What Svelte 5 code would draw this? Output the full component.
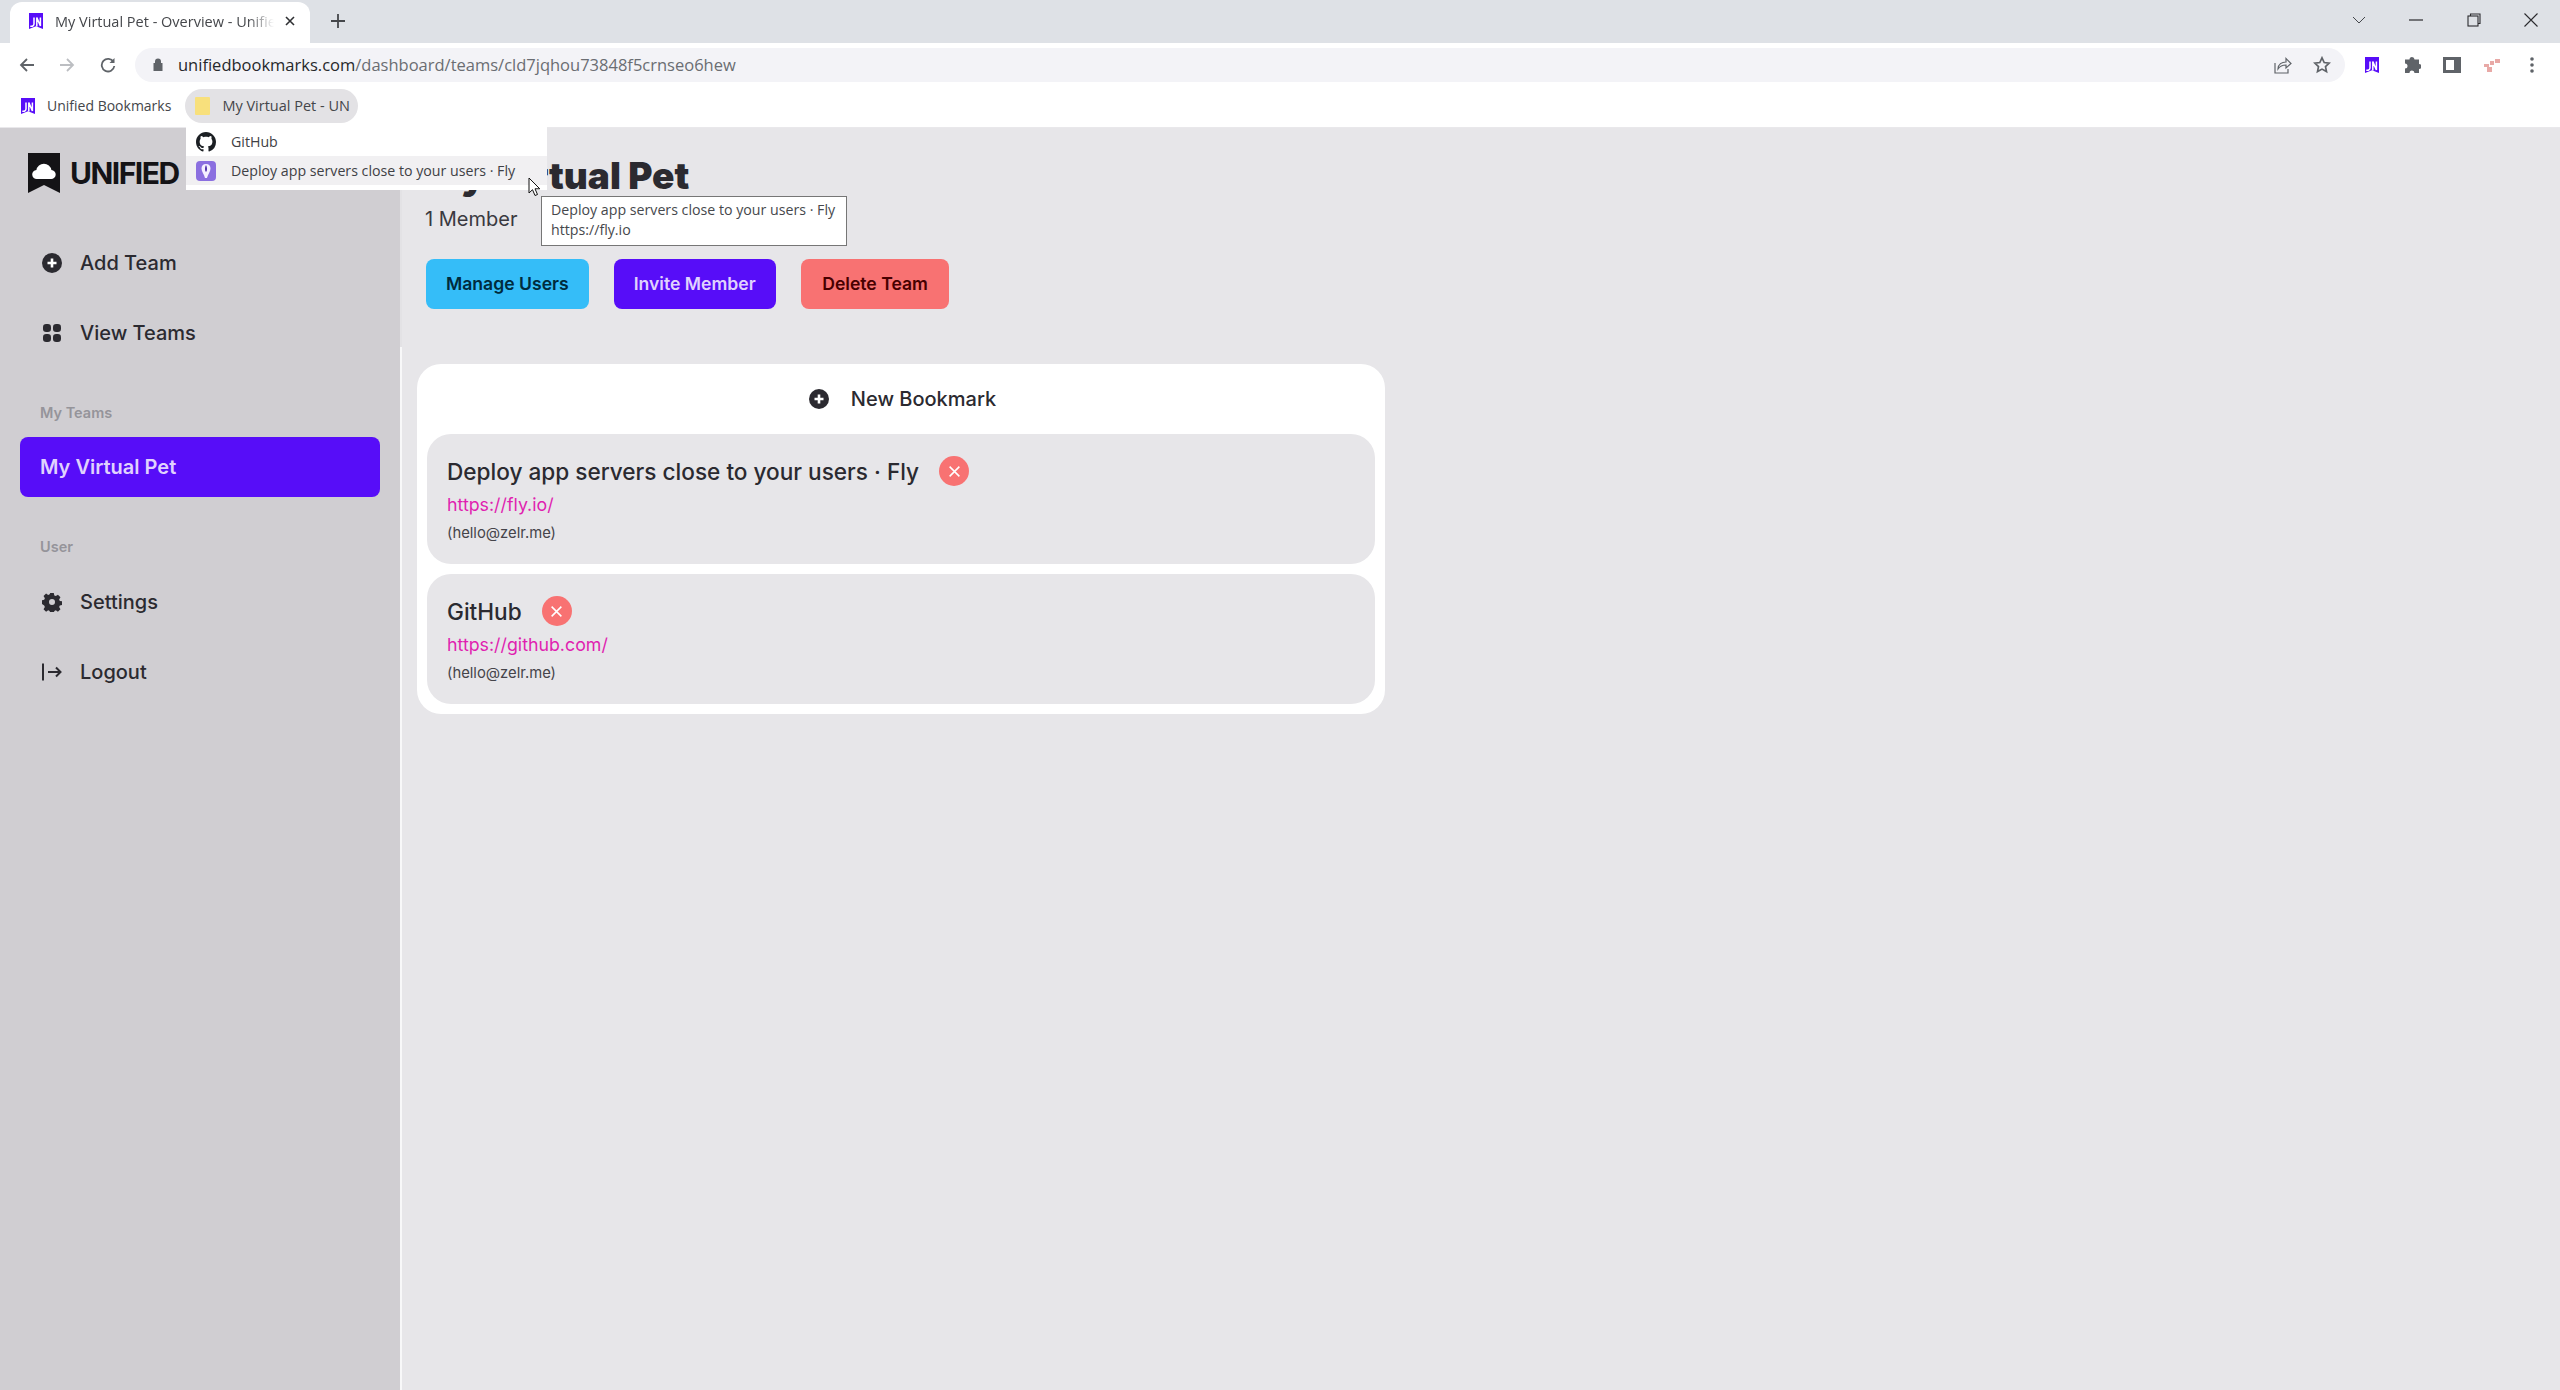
<script>
  const nav = [
    { label: 'Add Team', icon: 'plus' },
    { label: 'View Teams', icon: 'grid' }
  ];
  const userNav = [
    { label: 'Settings', icon: 'gear' },
    { label: 'Logout', icon: 'logout' }
  ];
  const bookmarks = [
    { title: 'Deploy app servers close to your users · Fly', url: 'https://fly.io/', owner: '(hello@zelr.me)' },
    { title: 'GitHub', url: 'https://github.com/', owner: '(hello@zelr.me)' }
  ];
</script>

{#snippet unLogo(size)}
  <svg class="un-logo" width={size} height={size} viewBox="0 0 16 16">
    <path d="M1 0h14v16l-7-2.800L1 16z" fill="#570df8" />
    <path d="M6 4.500v6.500a2.300 2.300 0 0 1-3.600 1.800M8.800 13.500V4.500l3.600 8.500V4.500" fill="none" stroke="#fff" stroke-width="1.500" />
  </svg>
{/snippet}

{#snippet icon(name)}
  {#if name === 'plus'}
    <svg width="20" height="20" viewBox="0 0 20 20">
      <circle cx="10" cy="10" r="10" fill="#2b2a30" />
      <path d="M10 5.500v9M5.500 10h9" stroke="#fff" stroke-width="2.600" />
    </svg>
  {:else if name === 'grid'}
    <svg width="20" height="20" viewBox="0 0 20 20" fill="#2b2a30">
      <rect x="1" y="1" width="8" height="8" rx="3.200" />
      <rect x="11" y="1" width="8" height="8" rx="3.200" />
      <rect x="1" y="11" width="8" height="8" rx="3.200" />
      <rect x="11" y="11" width="8" height="8" rx="3.200" />
    </svg>
  {:else if name === 'gear'}
    <svg width="20" height="20" viewBox="0 0 24 24">
      <path fill="#2b2a30" fill-rule="evenodd" d="M9.600 0h4.800l.7 3.200 2 .9 2.800-1.800 3.400 3.400-1.800 2.800.9 2 3.200.7v4.800l-3.200.7-.9 2 1.800 2.800-3.400 3.400-2.800-1.800-2 .9-.7 3.200H9.600l-.7-3.200-2-.9-2.800 1.800-3.400-3.400 1.800-2.800-.9-2L-1.600 14.400V9.600l3.200-.7.9-2-1.800-2.800 3.400-3.400 2.800 1.800 2-.9zM12 8a4 4 0 1 0 0 8 4 4 0 0 0 0-8z" transform="translate(1.200 1.200) scale(.9)" />
    </svg>
  {:else}
    <svg width="20" height="20" viewBox="0 0 20 20" fill="none" stroke="#2b2a30" stroke-width="2">
      <path d="M1 1.500v17M6 10h13M14 5.500l4.500 4.500-4.500 4.500" />
    </svg>
  {/if}
{/snippet}

<div class="window">
  <header class="tabstrip">
    <div class="tab">
      {@render unLogo(16)}
      <span class="tab-title">My Virtual Pet - Overview - Unified Bookmarks</span>
      <svg class="tab-close" width="10" height="10" viewBox="0 0 10 10" stroke="#2f3033" stroke-width="1.600"><path d="M1 1l8 8M9 1l-8 8" /></svg>
    </div>
    <svg class="new-tab" width="16" height="16" viewBox="0 0 16 16" stroke="#45474b" stroke-width="1.800"><path d="M8 1v14M1 8h14" /></svg>
    <div class="window-controls">
      <svg width="14" height="8" viewBox="0 0 14 8" fill="none" stroke="#45474b"><path d="M1 1l6 6 6-6" /></svg>
      <svg width="14" height="2" viewBox="0 0 14 2" stroke="#2b2b2e" stroke-width="1.200"><path d="M0 1h14" /></svg>
      <svg width="14" height="14" viewBox="0 0 14 14" fill="none" stroke="#2b2b2e" stroke-width="1.100"><rect x="1" y="3" width="10" height="10" /><path d="M3.500 3V1H13v9.500h-2" /></svg>
      <svg width="14" height="14" viewBox="0 0 14 14" stroke="#2b2b2e" stroke-width="1.100"><path d="M.5.500l13 13M13.500.500l-13 13" /></svg>
    </div>
  </header>

  <div class="toolbar">
    <svg width="16" height="16" viewBox="0 0 16 16" fill="none" stroke="#5f6368" stroke-width="1.800"><path d="M15 8H2M8 2L2 8l6 6" /></svg>
    <svg width="16" height="16" viewBox="0 0 16 16" fill="none" stroke="#bcbec2" stroke-width="1.800"><path d="M1 8h13M8 2l6 6-6 6" /></svg>
    <svg class="reload" width="16" height="16" viewBox="0 0 16 16" fill="none" stroke="#5f6368" stroke-width="1.800"><path d="M13.500 5A6.300 6.300 0 1 0 14.300 9" /><path d="M14.500 1v5h-5" fill="#5f6368" stroke="none" /></svg>
    <div class="omnibox">
      <svg width="10" height="13" viewBox="0 0 10 13"><path d="M2 5V3.500a3 3 0 0 1 6 0V5h1.500v8H.5V5z" fill="#5f6368" /></svg>
      <span class="url"><span class="url-host">unifiedbookmarks.com</span>/dashboard/teams/cld7jqhou73848f5crnseo6hew</span>
      <div class="omni-actions">
        <svg width="18" height="18" viewBox="0 0 18 18" fill="none" stroke="#5f6368" stroke-width="1.200"><path d="M1 7v10h13v-4M4 13c0-5 4-7 8-7V2.500l5 5-5 4.500V9c-3 0-6 1-8 4z" /></svg>
        <svg width="18" height="18" viewBox="0 0 18 18" fill="none" stroke="#5f6368" stroke-width="1.700"><path d="M9 1.800l2.200 4.700 5 .6-3.700 3.500 1 5L9 13.100l-4.500 2.500 1-5L1.800 7.100l5-.6z" /></svg>
      </div>
    </div>
    <div class="extensions">
      {@render unLogo(16)}
      <svg width="18" height="18" viewBox="0 0 18 18"><path fill="#5f6368" d="M6.500 3.500a2.500 2.500 0 0 1 5 0H16v4.500a2.500 2.500 0 0 1 0 5V17h-4.500a2.500 2.500 0 0 0-5 0H2v-4.500a2.500 2.500 0 0 0 0-5V3.500z" /></svg>
      <svg width="18" height="18" viewBox="0 0 18 18"><path fill-rule="evenodd" fill="#5f6368" d="M0 1h18v16H0zM3 4v10h8V4z" /></svg>
      <svg width="16" height="14" viewBox="0 0 16 14" fill="#e8a9a6"><path d="M0 6h5v3h3v5H3V9H0zM6 3h4v4H6zM11 1h5v4h-5z" /></svg>
      <svg width="4" height="16" viewBox="0 0 4 16" fill="#5f6368"><circle cx="2" cy="2" r="1.800" /><circle cx="2" cy="8" r="1.800" /><circle cx="2" cy="14" r="1.800" /></svg>
    </div>
  </div>

  <nav class="bookmarks-bar">
    <div class="bm-item">
      {@render unLogo(16)}
      <span>Unified Bookmarks</span>
    </div>
    <div class="bm-item open">
      <span class="folder"></span>
      <span>My Virtual Pet - UN</span>
    </div>
  </nav>

  <div class="page">
    <aside class="sidebar">
      <div class="logo">
        <svg width="32" height="40" viewBox="0 0 32 40">
          <path d="M0 0h32v40L16 32 0 40z" fill="#141316" />
          <path d="M9 26a4.500 4.500 0 0 1-.6-9 7.600 7.600 0 0 1 15 0 4.500 4.500 0 0 1-.4 9z" fill="#fff" />
        </svg>
        <span>UNIFIED</span>
      </div>

      <ul class="menu">
        {#each nav as item}
          <li>{@render icon(item.icon)}<span>{item.label}</span></li>
        {/each}
      </ul>

      <h3 class="menu-title teams">My Teams</h3>
      <div class="team active">My Virtual Pet</div>

      <h3 class="menu-title user">User</h3>
      <ul class="menu">
        {#each userNav as item}
          <li>{@render icon(item.icon)}<span>{item.label}</span></li>
        {/each}
      </ul>
    </aside>

    <main class="content">
      <h1>My Virtual Pet</h1>
      <p class="members">1 Member</p>
      <div class="actions">
        <button class="btn info">Manage Users</button>
        <button class="btn primary">Invite Member</button>
        <button class="btn error">Delete Team</button>
      </div>

      <section class="card">
        <div class="new-bookmark">
          {@render icon('plus')}
          <span>New Bookmark</span>
        </div>
        {#each bookmarks as b}
          <article class="bookmark">
            <div class="bookmark-head">
              <h2>{b.title}</h2>
              <span class="delete">
                <svg width="13" height="13" viewBox="0 0 12 12" stroke="#fff" stroke-width="1.400"><path d="M1.500 1.500l9 9M10.500 1.500l-9 9" /></svg>
              </span>
            </div>
            <a href={b.url}>{b.url}</a>
            <small>{b.owner}</small>
          </article>
        {/each}
      </section>
    </main>
  </div>

  <!-- bookmark folder popup, system tooltip and mouse pointer sit over the page -->
  <div class="popup">
    <div class="popup-row">
      <svg width="20" height="20" viewBox="0 0 16 16"><path fill="#1b1f23" d="M8 0C3.580 0 0 3.580 0 8c0 3.540 2.290 6.530 5.470 7.590.4.070.55-.17.55-.38 0-.19-.01-.82-.01-1.490-2.010.37-2.530-.49-2.690-.94-.09-.23-.48-.94-.82-1.130-.28-.15-.68-.52-.01-.53.63-.01 1.080.58 1.230.82.72 1.210 1.870.87 2.330.66.07-.52.28-.87.51-1.070-1.780-.2-3.640-.89-3.640-3.950 0-.87.31-1.590.82-2.150-.08-.2-.36-1.020.08-2.120 0 0 .67-.21 2.200.82.640-.18 1.320-.27 2-.27s1.360.09 2 .27c1.530-1.040 2.200-.82 2.200-.82.440 1.100.160 1.920.080 2.120.51.560.820 1.270.820 2.150 0 3.070-1.870 3.750-3.650 3.950.290.250.540.730.540 1.480 0 1.070-.010 1.930-.010 2.200 0 .210.150.460.550.380A8.013 8.013 0 0 0 16 8c0-4.420-3.580-8-8-8z" /></svg>
      <span>GitHub</span>
    </div>
    <div class="popup-row hover">
      <svg width="20" height="20" viewBox="0 0 20 20">
        <rect width="20" height="20" rx="4" fill="#8b6fe0" />
        <path d="M10 3c3 0 4.500 2 4.500 4.500 0 3-2.500 5.500-3.500 9.500H9C8 13 5.500 10.500 5.500 7.500 5.500 5 7 3 10 3z" fill="#f4f0ff" />
        <path d="M10 4c-1 2-1.300 4-.6 6.500h1.200C11.300 8 11 6 10 4z" fill="#4b2aa8" />
      </svg>
      <span>Deploy app servers close to your users · Fly</span>
    </div>
  </div>

  <div class="tooltip">Deploy app servers close to your users · Fly<br />https://fly.io</div>

  <svg class="cursor" width="13" height="20" viewBox="0 0 13 20"><path d="M1 1v15l3.500-3.300 2.500 5.800 2.500-1-2.500-5.700h4.800z" fill="#fff" stroke="#111" stroke-width="1" /></svg>
</div>

<style>
  :global(body) {
    margin: 0;
    background: #e7e6e9;
  }

  .window {
    position: relative;
    width: 2560px;
    height: 1390px;
    overflow: hidden;
    display: flex;
    flex-direction: column;
    font-family: Inter, "Liberation Sans", sans-serif;
    color: #2b2a30;
  }

  .tabstrip {
    height: 43px;
    flex: none;
    background: #dee1e6;
    display: flex;
    align-items: flex-end;
    padding-left: 10px;
    box-sizing: border-box;
  }

  .tab {
    width: 300px;
    height: 41px;
    background: #fff;
    border-radius: 12px 12px 0 0;
    display: flex;
    align-items: center;
    padding: 0 15px 3px 18px;
    box-sizing: border-box;
    gap: 11px;
  }

  .tab-title {
    flex: 1;
    overflow: hidden;
    white-space: nowrap;
    font: 14.500px "Open Sans", "Liberation Sans", sans-serif;
    color: #45474b;
    mask-image: linear-gradient(to right, #000 88%, transparent);
  }

  .new-tab {
    margin: 0 0 14px 20px;
  }

  .window-controls {
    margin-left: auto;
    align-self: center;
    display: flex;
    align-items: center;
    width: 186px;
    justify-content: space-between;
    margin-right: 22px;
    margin-bottom: 4px;
  }

  .toolbar {
    height: 43px;
    flex: none;
    background: #fff;
    display: flex;
    align-items: center;
    padding-left: 19px;
    gap: 24px;
    box-sizing: border-box;
  }

  .reload {
    margin-left: 1px;
  }

  .omnibox {
    flex: 1;
    height: 34px;
    margin-left: -5px;
    background: #f3f3f7;
    border-radius: 17px;
    display: flex;
    align-items: center;
    padding: 0 14px 0 18px;
    gap: 15px;
  }

  .url {
    font: 16.500px "Open Sans", "Liberation Sans", sans-serif;
    color: #6a6d72;
  }

  .url-host {
    color: #26282b;
  }

  .omni-actions {
    margin-left: auto;
    display: flex;
    gap: 21px;
    align-items: center;
  }

  .extensions {
    display: grid;
    grid-auto-flow: column;
    grid-auto-columns: 40px;
    justify-items: center;
    align-items: center;
    padding-right: 8px;
    margin-left: -17px;
  }

  .bookmarks-bar {
    height: 41px;
    flex: none;
    background: #fff;
    display: flex;
    align-items: center;
    padding: 0 0 2px 20px;
    box-sizing: border-box;
    font: 14px "Open Sans", "Liberation Sans", sans-serif;
    color: #44464a;
  }

  .bm-item {
    display: flex;
    align-items: center;
    gap: 11px;
    height: 34px;
  }

  .bm-item.open {
    margin-left: 14px;
    background: #e3e2e5;
    border-radius: 17px;
    padding: 0 8px 0 10px;
    gap: 12px;
    font-size: 14.500px;
  }

  .folder {
    width: 15px;
    height: 18px;
    background: #f8e07c;
    border-radius: 1px;
  }

  .page {
    flex: 1;
    display: flex;
    min-height: 0;
    border-top: 1px solid #e9e8eb;
  }

  .sidebar {
    flex: none;
    width: 360px;
    background: #d0ced2;
    border-right: 2px solid;
    border-image: linear-gradient(#e3e2e5 220px, #f8f8f9 220px) 1;
    padding: 24px 20px 0;
  }

  .logo {
    display: flex;
    align-items: center;
    gap: 10px;
    padding-left: 8px;
    font-size: 30px;
    font-weight: 700;
    letter-spacing: -1.500px;
    color: #141316;
    height: 42px;
  }

  .menu {
    list-style: none;
    margin: 0;
    padding: 0;
  }

  .logo + .menu {
    margin-top: 34px;
  }

  .menu li {
    height: 70px;
    display: flex;
    align-items: center;
    gap: 18px;
    padding-left: 22px;
    font-size: 20px;
    font-weight: 500;
  }

  .menu-title {
    margin: 0;
    font-size: 14.500px;
    font-weight: 600;
    color: #95949a;
    padding-left: 20px;
  }

  .menu-title.teams {
    margin-top: 36px;
  }

  .menu-title.user {
    margin-top: 41px;
    margin-bottom: 12px;
  }

  .team {
    margin-top: 16px;
    height: 60px;
    line-height: 60px;
    padding-left: 20px;
    border-radius: 8px;
    background: #570df8;
    color: #e0d2fe;
    font-size: 20px;
    font-weight: 600;
  }

  .content {
    flex: 1;
    padding: 0 15px;
  }

  h1 {
    margin: 26px 0 0 8px;
    font-size: 37px;
    line-height: 44px;
    font-weight: 900;
  }

  .members {
    margin: 7px 0 0 8px;
    font-size: 20px;
    line-height: 28px;
    color: #3a3940;
  }

  .actions {
    display: flex;
    gap: 25px;
    margin: 26px 0 0 9px;
  }

  .btn {
    height: 50px;
    border: 0;
    border-radius: 8px;
    padding: 0 20px 2px;
    font-family: inherit;
    font-size: 17.600px;
    font-weight: 600;
  }

  .btn.info { background: #35bdf8; color: #002b3d; }
  .btn.primary { background: #570df8; color: #e0d2fe; }
  .btn.error { background: #f87272; color: #470000; padding: 0 21.500px 2px; }

  .card {
    width: 968px;
    box-sizing: border-box;
    margin-top: 55px;
    padding: 0 10px 10px;
    background: #fff;
    border-radius: 24px;
  }

  .new-bookmark {
    height: 70px;
    display: flex;
    align-items: center;
    justify-content: center;
    gap: 22px;
    padding-left: 3px;
    font-size: 20px;
    font-weight: 500;
  }

  .bookmark {
    height: 130px;
    box-sizing: border-box;
    padding: 22px 20px 0;
    border-radius: 24px;
    background: #e7e6e9;
    display: flex;
    flex-direction: column;
    align-items: flex-start;
  }

  .bookmark + .bookmark {
    margin-top: 10px;
  }

  .bookmark-head {
    display: flex;
    align-items: center;
    gap: 20px;
    height: 30px;
  }

  h2 {
    margin: 0;
    font-size: 22.600px;
    font-weight: 500;
    white-space: nowrap;
  }

  .delete {
    width: 30px;
    height: 30px;
    border-radius: 50%;
    background: #f87272;
    display: flex;
    align-items: center;
    justify-content: center;
  }

  .bookmark a {
    margin-top: 5px;
    font-size: 17.800px;
    line-height: 28px;
    color: #e01fb0;
    text-decoration: none;
  }

  .bookmark small {
    margin-top: 4px;
    font-size: 14.800px;
    line-height: 20px;
    color: #45444a;
  }

  .popup {
    position: absolute;
    left: 186px;
    top: 123px;
    width: 361px;
    height: 67px;
    background: #fff;
    padding-top: 4px;
    box-sizing: border-box;
    font: 14.200px "Open Sans", "Liberation Sans", sans-serif;
    color: #3f4145;
  }

  .popup-row {
    height: 29px;
    display: flex;
    align-items: center;
    gap: 15px;
    padding-left: 10px;
  }

  .popup-row.hover {
    background: #f1f0f2;
  }

  .tooltip {
    position: absolute;
    left: 541px;
    top: 196px;
    width: 306px;
    height: 50px;
    box-sizing: border-box;
    padding: 3px 9px;
    background: #fff;
    border: 1px solid #767676;
    font: 14.200px/20px "Open Sans", "Liberation Sans", sans-serif;
    color: #46484c;
    white-space: nowrap;
  }

  .cursor {
    position: absolute;
    left: 528px;
    top: 177px;
  }
</style>
